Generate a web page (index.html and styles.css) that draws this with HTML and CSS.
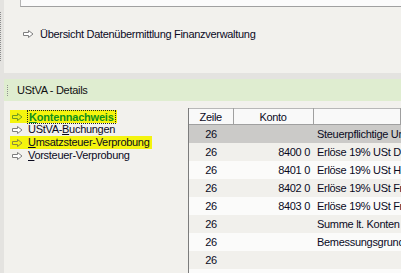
FILE: index.html
```html
<!DOCTYPE html>
<html lang="de">
<head>
    <meta charset="UTF-8">
    <meta name="viewport" content="width=device-width, initial-scale=1.0">
    <title>UStVA - Details</title>
    <link rel="stylesheet" href="styles.css">
</head>
<body>
    <div class="strip">
        <div class="grip"></div>
    </div>
    <div class="main">
        <div class="top-pane">
            <div class="memo"></div>
            <div class="link-row">
                <svg class="arrow" width="11" height="8" viewBox="0 0 11 8"><path d="M0.5 2.5 H5.5 V0.5 L10 4 L5.5 7.5 V5.5 H0.5 Z" fill="#fff" stroke="#7f7f7f"/></svg>
                <span>Übersicht Datenübermittlung Finanzverwaltung</span>
            </div>
        </div>

        <div class="details">
            <div class="details-head">
                <div class="head-grip"></div>
                <span>UStVA - Details</span>
            </div>
            <div class="details-body">
                <ul class="tree">
                    <li><span class="item marked active">
                        <svg class="arrow" width="11" height="8" viewBox="0 0 11 8"><path d="M0.5 2.5 H5.5 V0.5 L10 4 L5.5 7.5 V5.5 H0.5 Z" fill="#e9f21a" stroke="#6f9a20"/></svg>
                        <span class="focus"><u>K</u>ontennachweis</span>
                    </span></li>
                    <li><span class="item">
                        <svg class="arrow" width="11" height="8" viewBox="0 0 11 8"><path d="M0.5 2.5 H5.5 V0.5 L10 4 L5.5 7.5 V5.5 H0.5 Z" fill="#fff" stroke="#7f7f7f"/></svg>
                        <span>UStVA-<u>B</u>uchungen</span>
                    </span></li>
                    <li><span class="item marked">
                        <svg class="arrow" width="11" height="8" viewBox="0 0 11 8"><path d="M0.5 2.5 H5.5 V0.5 L10 4 L5.5 7.5 V5.5 H0.5 Z" fill="none" stroke="#8a8a40"/></svg>
                        <span><u>U</u>msatzsteuer-Verprobung</span>
                    </span></li>
                    <li><span class="item">
                        <svg class="arrow" width="11" height="8" viewBox="0 0 11 8"><path d="M0.5 2.5 H5.5 V0.5 L10 4 L5.5 7.5 V5.5 H0.5 Z" fill="#fff" stroke="#7f7f7f"/></svg>
                        <span><u>V</u>orsteuer-Verprobung</span>
                    </span></li>
                </ul>

                <div class="grid">
                    <table>
                        <colgroup>
                            <col class="col-zeile">
                            <col class="col-konto">
                            <col>
                        </colgroup>
                        <thead>
                            <tr>
                                <th>Zeile</th>
                                <th>Konto</th>
                                <th></th>
                            </tr>
                        </thead>
                        <tbody>
                            <tr class="selected"><td>26</td><td class="num"></td><td>Steuerpflichtige Umsätze</td></tr>
                            <tr><td>26</td><td class="num">8400 0</td><td>Erlöse 19% USt Deutschland</td></tr>
                            <tr><td>26</td><td class="num">8401 0</td><td>Erlöse 19% USt Handel</td></tr>
                            <tr><td>26</td><td class="num">8402 0</td><td>Erlöse 19% USt Fremd</td></tr>
                            <tr><td>26</td><td class="num">8403 0</td><td>Erlöse 19% USt Fremd</td></tr>
                            <tr><td>26</td><td class="num"></td><td>Summe lt. Konten</td></tr>
                            <tr><td>26</td><td class="num"></td><td>Bemessungsgrundlage</td></tr>
                            <tr><td>26</td><td class="num"></td><td></td></tr>
                            <tr><td>26</td><td class="num"></td><td>abziehbare Vorsteuer</td></tr>
                        </tbody>
                    </table>
                </div>
            </div>
        </div>
    </div>
</body>
</html>
```

FILE: styles.css
```css
* {
    margin: 0;
    padding: 0;
    box-sizing: border-box;
}
html, body {
    width: 401px;
    height: 273px;
    overflow: hidden;
}
body {
    display: flex;
    background-color: #e4e3e0;
    font-family: "Liberation Sans", Arial, sans-serif;
    font-size: 11px;
    letter-spacing: -0.3px;
    color: #0a0a1e;
}
.strip {
    width: 4px;
    flex-shrink: 0;
    padding-top: 12px;
}
.grip {
    width: 1px;
    height: 50px;
    background: repeating-linear-gradient(to bottom, #8c8c8c 0 1px, transparent 1px 2px);
}
.main {
    flex: 1;
    display: flex;
    flex-direction: column;
}

/* top pane */
.top-pane {
    height: 73px;
    background-color: #f2f1ed;
}
.memo {
    margin-left: 16px;
    height: 7px;
    background-color: #fbfbfb;
    border-left: 1px solid #b4b4b4;
    border-bottom: 1px solid #a0a0a0;
}
.link-row {
    display: flex;
    align-items: center;
    margin-top: 20px;
    margin-left: 19px;
    line-height: 14px;
    gap: 6px;
}
.arrow {
    flex-shrink: 0;
}

/* details */
.details {
    flex: 1;
    margin-top: 6px;
    display: flex;
    flex-direction: column;
    background-color: #f2f1ed;
    min-height: 0;
}
.details-head {
    height: 22px;
    display: flex;
    align-items: center;
    gap: 9px;
    padding-left: 3px;
    background-color: #dfedd0;
    color: #101010;
}
.head-grip {
    width: 1px;
    height: 11px;
    background: repeating-linear-gradient(to bottom, #909090 0 1px, transparent 1px 2px);
}
.details-body {
    flex: 1;
    display: flex;
    min-height: 0;
}

/* tree */
.tree {
    list-style: none;
    width: 184px;
    flex-shrink: 0;
    padding: 9px 0 0 6px;
}
.tree li {
    height: 13px;
    line-height: 13px;
}
.item {
    display: inline-flex;
    align-items: center;
    gap: 5px;
    height: 13px;
    padding: 0 2px;
}
.item.marked {
    background-color: #f4f40e;
}
.item.active {
    color: #10901a;
    font-weight: bold;
    letter-spacing: -0.2px;
}
.focus {
    outline: 1px dotted #222;
    outline-offset: 0;
    padding: 0 1px;
    line-height: 12px;
}

/* grid */
.grid {
    flex: 1;
    margin-top: 7px;
    border-left: 1px solid #7c7c7c;
    overflow: hidden;
    min-width: 0;
}
table {
    width: 212px;
    table-layout: fixed;
    border-collapse: collapse;
}
.col-zeile {
    width: 44px;
}
.col-konto {
    width: 80px;
}
th {
    height: 16px;
    font-weight: normal;
    background-color: #f9f9f9;
    border-top: 1px solid #b8b8b8;
    border-bottom: 1px solid #a0a0a0;
    border-right: 1px solid #a0a0a0;
    text-align: center;
}
td {
    height: 18px;
    white-space: nowrap;
    overflow: hidden;
    text-align: left;
    padding-left: 4px;
    background-color: #fbfbfa;
}
td:first-child {
    text-align: center;
    padding-left: 0;
}
td.num {
    text-align: right;
    padding-right: 3px;
}
tbody tr:nth-child(even) td {
    background-color: #f1f0ec;
}
tbody tr.selected td {
    background-color: #cbcac8;
}
```
